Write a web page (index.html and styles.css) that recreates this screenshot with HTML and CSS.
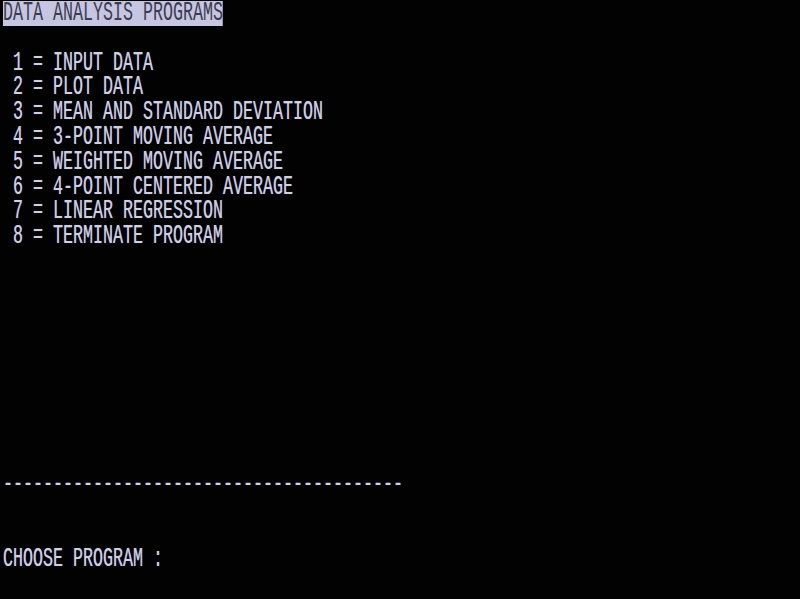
FILE: index.html
```html
<!DOCTYPE html>
<html>
<head>
<meta charset="utf-8">
<link rel="stylesheet" href="styles.css">
</head>
<body>
<div class="monitor">
<pre class="screen"><span class="inverse">DATA ANALYSIS PROGRAMS</span>

 1 = INPUT DATA
 2 = PLOT DATA
 3 = MEAN AND STANDARD DEVIATION
 4 = 3-POINT MOVING AVERAGE
 5 = WEIGHTED MOVING AVERAGE
 6 = 4-POINT CENTERED AVERAGE
 7 = LINEAR REGRESSION
 8 = TERMINATE PROGRAM









----------------------------------------


CHOOSE PROGRAM :</pre>
</div>
</body>
</html>
```
FILE: styles.css
```css
html, body {
  margin: 0;
  padding: 0;
  background: #000;
  width: 800px;
  height: 599px;
  overflow: hidden;
}

.monitor {
  width: 800px;
  height: 599px;
  background: #020203;
  padding: 1px 0 0 3px;
  box-sizing: border-box;
}

.screen {
  margin: 0;
  font-family: "Liberation Mono", "DejaVu Sans Mono", monospace;
  font-size: 27px;
  line-height: 24.8px;
  color: #cfcfe6;
  white-space: pre;
  transform: scaleX(0.6173);
  transform-origin: 0 0;
  text-shadow: 0 0 1px rgba(200, 200, 235, 0.6);
}

.inverse {
  display: inline-block;
  background: #c6c6e2;
  color: #3c3c50;
  text-shadow: none;
}
```
